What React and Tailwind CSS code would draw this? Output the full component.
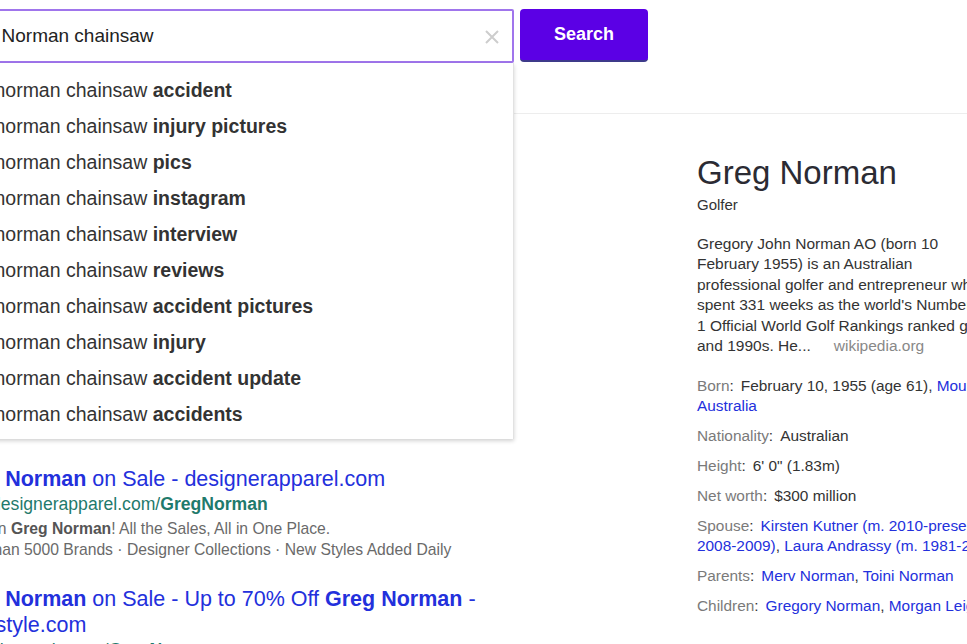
const suggestions = [
  "accident",
  "injury pictures",
  "pics",
  "instagram",
  "interview",
  "reviews",
  "accident pictures",
  "injury",
  "accident update",
  "accidents",
];

function Link({ children }) {
  return <span className="text-[#2330dc]">{children}</span>;
}

function Fact({ label, children }) {
  return (
    <div className="whitespace-nowrap">
      <span className="text-[#7a7a7a]">{label}</span>
      <span className="text-[#333] mr-[7px]">:</span>
      {children}
    </div>
  );
}

export default function App() {
  return (
    <div className="w-[967px] h-[644px] overflow-hidden bg-white font-['Liberation_Sans',Arial,sans-serif]">
      <div className="-ml-[58px] w-[1025px]">
        <header className="h-[114px] border-b border-[#ededed] pt-[9px]">
          <div className="flex items-start">
            <div className="relative w-[572px] h-[54px] border-2 border-[#a075ec] rounded-[2px] flex items-center pl-[10px] pr-[12px] text-[19px] text-[#222]">
              <span className="flex-1">Greg Norman chainsaw</span>
              <svg width="16" height="16" viewBox="0 0 16 16" className="mt-[2px]">
                <path d="M2 2L14 14M14 2L2 14" stroke="#cdcdcd" strokeWidth="2" />
              </svg>
              <ul className="absolute left-[-2px] right-[-2px] top-[52px] bg-white border-r border-[#e2e2e2] shadow-[0_2px_4px_rgba(0,0,0,0.18)] pt-[10px] pb-[6px] z-10">
                {suggestions.map((s) => (
                  <li key={s} className="h-[36px] flex items-center pl-[8px] text-[19.5px] text-[#333] whitespace-nowrap">
                    greg norman chainsaw&nbsp;<b className="font-bold">{s}</b>
                  </li>
                ))}
              </ul>
            </div>
            <button className="ml-[6px] w-[128px] h-[53px] rounded-[4px] bg-[#5b00e5] border-b-2 border-[#3d3a8a] text-white font-bold text-[18px]">
              Search
            </button>
          </div>
        </header>

        <main className="flex">
          <section className="w-[755px] shrink-0 pl-[7px] pt-[352px]">
            <div className="text-[21.5px] leading-[26px] text-[#2330dc] whitespace-nowrap">
              <b>Greg Norman</b> on Sale - designerapparel.com
            </div>
            <div className="mt-[2px] text-[17.6px] leading-[20px] text-[#1f7a6c] whitespace-nowrap">
              www.designerapparel.com/<b>GregNorman</b>
            </div>
            <div className="mt-[4px] text-[15.7px] leading-[21px] text-[#6a6a6a] whitespace-nowrap">
              <div>
                Save on <b className="text-[#555]">Greg Norman</b>! All the Sales, All in One Place.
              </div>
              <div>More than 5000 Brands · Designer Collections · New Styles Added Daily</div>
            </div>
            <div className="mt-[26px] text-[21.5px] leading-[26px] text-[#2330dc] whitespace-nowrap">
              <div>
                <b>Greg Norman</b> on Sale - Up to 70% Off <b>Greg Norman</b> -
              </div>
              <div>shopstyle.com</div>
            </div>
            <div className="mt-[2px] text-[17.6px] leading-[20px] text-[#1f7a6c] whitespace-nowrap">
              www.shopstyle.com/<b>GregNorman</b>
            </div>
          </section>

          <aside className="pt-[39px] text-[#333] whitespace-nowrap">
            <h1 className="text-[33px] leading-[40px] text-[#2b2b33]">Greg Norman</h1>
            <div className="mt-[2px] text-[15px] leading-[20px]">Golfer</div>
            <div className="mt-[19px] text-[15.5px] leading-[20.4px]">
              <div>Gregory John Norman AO (born 10</div>
              <div>February 1955) is an Australian</div>
              <div>professional golfer and entrepreneur who</div>
              <div>spent 331 weeks as the world's Number</div>
              <div>1 Official World Golf Rankings ranked golfer in the 1980s</div>
              <div>
                and 1990s. He...<span className="ml-[23px] text-[#888]">wikipedia.org</span>
              </div>
            </div>
            <div className="mt-[20px] flex flex-col gap-[10px] text-[15.4px] leading-[20px]">
              <div>
                <Fact label="Born">
                  <span className="text-[#333]">February 10, 1955 (age 61), </span>
                  <Link>Mount Isa, Queensland,</Link>
                </Fact>
                <Link>Australia</Link>
              </div>
              <Fact label="Nationality">
                <span>Australian</span>
              </Fact>
              <Fact label="Height">
                <span>6' 0" (1.83m)</span>
              </Fact>
              <Fact label="Net worth">
                <span>$300 million</span>
              </Fact>
              <div>
                <Fact label="Spouse">
                  <Link>Kirsten Kutner (m. 2010-present)</Link>, <Link>Chris Evert (m.</Link>
                </Fact>
                <div>
                  <Link>2008-2009)</Link>, <Link>Laura Andrassy (m. 1981-2007)</Link>
                </div>
              </div>
              <Fact label="Parents">
                <Link>Merv Norman</Link>, <Link>Toini Norman</Link>
              </Fact>
              <Fact label="Children">
                <Link>Gregory Norman</Link>, <Link>Morgan Leigh Norman</Link>
              </Fact>
            </div>
          </aside>
        </main>
      </div>
    </div>
  );
}
